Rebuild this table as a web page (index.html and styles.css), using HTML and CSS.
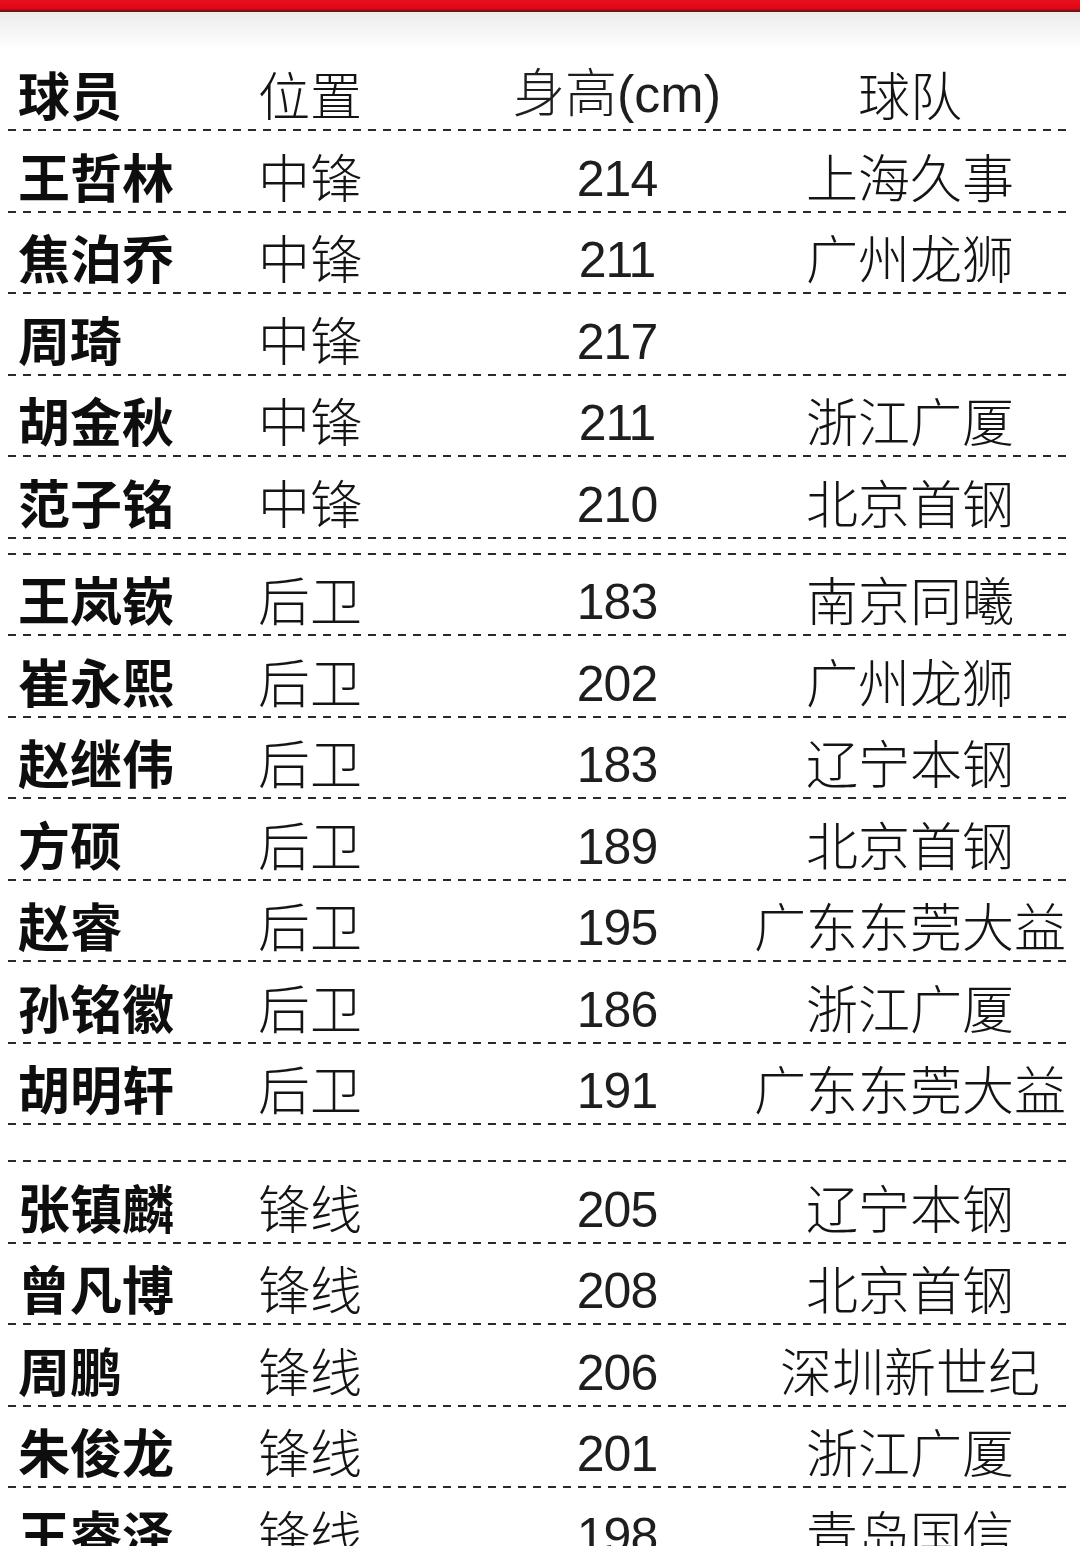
FILE: index.html
```html
<!DOCTYPE html>
<html lang="zh-CN">
<head>
<meta charset="utf-8">
<title>球员名单</title>
<link rel="stylesheet" href="styles.css">
</head>
<body>
<div class="topbar"></div>
<div class="shade"></div>
<div class="table">
  <div class="row head">
    <div class="c name">球员</div><div class="c pos">位置</div><div class="c hgt mixed">身高(cm)</div><div class="c team">球队</div>
  </div>
  <div class="row"><div class="c name">王哲林</div><div class="c pos">中锋</div><div class="c hgt">214</div><div class="c team">上海久事</div></div>
  <div class="row"><div class="c name">焦泊乔</div><div class="c pos">中锋</div><div class="c hgt">211</div><div class="c team">广州龙狮</div></div>
  <div class="row"><div class="c name">周琦</div><div class="c pos">中锋</div><div class="c hgt">217</div><div class="c team"></div></div>
  <div class="row"><div class="c name">胡金秋</div><div class="c pos">中锋</div><div class="c hgt">211</div><div class="c team">浙江广厦</div></div>
  <div class="row"><div class="c name">范子铭</div><div class="c pos">中锋</div><div class="c hgt">210</div><div class="c team">北京首钢</div></div>
  <div class="gap gap-s"></div>
  <div class="row"><div class="c name">王岚嵚</div><div class="c pos">后卫</div><div class="c hgt">183</div><div class="c team">南京同曦</div></div>
  <div class="row"><div class="c name">崔永熙</div><div class="c pos">后卫</div><div class="c hgt">202</div><div class="c team">广州龙狮</div></div>
  <div class="row"><div class="c name">赵继伟</div><div class="c pos">后卫</div><div class="c hgt">183</div><div class="c team">辽宁本钢</div></div>
  <div class="row"><div class="c name">方硕</div><div class="c pos">后卫</div><div class="c hgt">189</div><div class="c team">北京首钢</div></div>
  <div class="row"><div class="c name">赵睿</div><div class="c pos">后卫</div><div class="c hgt">195</div><div class="c team">广东东莞大益</div></div>
  <div class="row"><div class="c name">孙铭徽</div><div class="c pos">后卫</div><div class="c hgt">186</div><div class="c team">浙江广厦</div></div>
  <div class="row"><div class="c name">胡明轩</div><div class="c pos">后卫</div><div class="c hgt">191</div><div class="c team">广东东莞大益</div></div>
  <div class="gap gap-l"></div>
  <div class="row"><div class="c name">张镇麟</div><div class="c pos">锋线</div><div class="c hgt">205</div><div class="c team">辽宁本钢</div></div>
  <div class="row"><div class="c name">曾凡博</div><div class="c pos">锋线</div><div class="c hgt">208</div><div class="c team">北京首钢</div></div>
  <div class="row"><div class="c name">周鹏</div><div class="c pos">锋线</div><div class="c hgt">206</div><div class="c team">深圳新世纪</div></div>
  <div class="row"><div class="c name">朱俊龙</div><div class="c pos">锋线</div><div class="c hgt">201</div><div class="c team">浙江广厦</div></div>
  <div class="row"><div class="c name">王睿泽</div><div class="c pos">锋线</div><div class="c hgt">198</div><div class="c team">青岛国信</div></div>
</div>
</body>
</html>
```
FILE: styles.css
```css
html, body {
  margin: 0;
  padding: 0;
  background: #ffffff;
  overflow: hidden;
}
body {
  width: 1080px;
  height: 1546px;
  font-family: "Noto Sans CJK SC", sans-serif;
  color: #141414;
}
.topbar {
  height: 10px;
  background: linear-gradient(#e9101c, #e2061a 80%, #b20d12);
  border-bottom: 2px solid #7a1212;
}
.shade {
  height: 37.5px;
  background: linear-gradient(#ebebeb, #f6f6f6 50%, #ffffff);
}
.table {
  margin: 0 10px 0 8px;
}
.row {
  box-sizing: border-box;
  height: 81.5px;
  padding: 8px 0 0 10px;
  display: grid;
  grid-template-columns: 240px 244px 230px 1fr;
  align-items: center;
  background-image: repeating-linear-gradient(90deg, #2a2a2a 0 8px, transparent 8px 15px);
  background-size: 100% 2px;
  background-position: left bottom;
  background-repeat: no-repeat;
}
.gap {
  box-sizing: border-box;
  background-image: repeating-linear-gradient(90deg, #2a2a2a 0 8px, transparent 8px 15px);
  background-size: 100% 2px;
  background-position: left bottom;
  background-repeat: no-repeat;
}
.gap-s { height: 16px; }
.gap-l { height: 37px; }
.c {
  font-size: 52px;
  line-height: 1;
  white-space: nowrap;
}
.name {
  font-weight: 700;
  color: #0e0e0e;
}
.pos {
  font-weight: 300;
}
.hgt {
  text-align: center;
  font-family: "Liberation Sans", "Noto Sans CJK SC", sans-serif;
  font-size: 50px;
  letter-spacing: -1px;
  padding-top: 6px;
  color: #1e1e1e;
}
.hgt.mixed {
  font-size: 52px;
  letter-spacing: 0;
  padding-top: 0;
  font-weight: 300;
}
.team {
  text-align: center;
  padding-left: 18px;
  font-weight: 300;
}
```
